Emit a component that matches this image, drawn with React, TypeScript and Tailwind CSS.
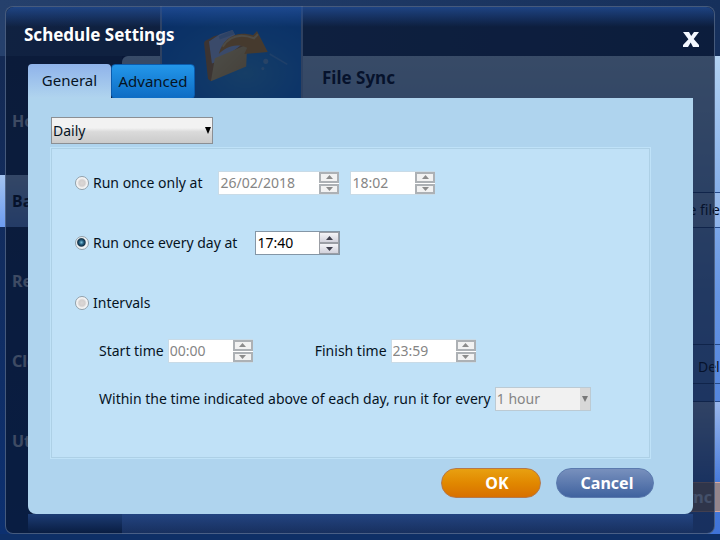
import { useState } from "react";
import type { ReactNode } from "react";

const navItems = ["Home", "Backup", "Restore", "Cloud", "Utilities"];

function FolderPicture() {
  return (
    <svg viewBox="0 0 142 92" preserveAspectRatio="none" className="block h-full w-full" aria-hidden="true">
      <defs>
        <radialGradient id="sky" cx="60%" cy="70%" r="80%">
          <stop offset="0" stopColor="#3aa4f0" />
          <stop offset="0.5" stopColor="#1c86f8" />
          <stop offset="1" stopColor="#0c70f0" />
        </radialGradient>
        <linearGradient id="folder" x1="0" y1="0" x2="1" y2="1">
          <stop offset="0" stopColor="#ffe089" />
          <stop offset="1" stopColor="#e0aa50" />
        </linearGradient>
      </defs>
      <rect width="142" height="92" fill="url(#sky)" />
      <path d="M110 46 L128 56" stroke="#a8d4ff" strokeWidth="1.5" opacity="0.4" />
      <path d="M43 36 Q43 33 47 32 L53 29 L57 28 L80 34 L85 38 L50 72 L47 70 Z" fill="#c08238" />
      <path d="M48 34 L59 27 L72 23 L76 30 L83 36 L60 52 L51 55 Z" fill="#b9d0ff" />
      <path d="M58 29 L72 23 L74 27 L59 32 Z" fill="#8fb6f0" />
      <path d="M50 72 L54 50 L87 37 L86 58 Z" fill="url(#folder)" />
      <path d="M58 46 C62 31 75 23 93 28 L97 24 L108 44 L84 46 L87 40 C74 35 65 40 58 46 Z" fill="#e6982a" />
      <path d="M62 39 C69 29 80 26 94 31 L98 27" fill="none" stroke="#ffd27a" strokeWidth="2" />
      <circle cx="106" cy="53" r="2.5" fill="#9cc8f0" opacity="0.7" />
      <circle cx="103" cy="60" r="1.5" fill="#9cc8f0" opacity="0.6" />
    </svg>
  );
}

function Background() {
  return (
    <div className="absolute inset-0 flex flex-col overflow-hidden bg-[#0a1b48]" aria-hidden="true">
      <div className="h-14 shrink-0 bg-linear-to-r from-[#25406c] to-[#16305c]" />
      <div className="flex min-h-0 flex-1">
        <div className="w-[122px] shrink-0 bg-linear-to-b from-[#142a54] to-[#0c3070] pt-[39px]">
          {navItems.map((name) => (
            <div
              key={name}
              className={
                name === "Backup"
                  ? "mb-7 flex h-[52px] items-center bg-linear-to-b from-[#a4c4f0] to-[#6d9cf0] pl-3 text-base font-bold text-[#00081c]"
                  : "mb-7 flex h-[52px] items-center pl-3 text-base font-bold text-[#c8d2e6]"
              }
            >
              {name}
            </div>
          ))}
        </div>
        <div className="flex flex-1 flex-col overflow-hidden rounded-tl-md bg-linear-to-b from-[#b2d2f2] via-[#6594e2] to-[#3f73d8] text-sm text-[#020a20]">
          <div className="flex h-[136px] pt-2.5 pl-[200px] text-[17px] font-bold">File Sync</div>
          <div className="flex h-9 items-center justify-end border-y border-[#244a8c] bg-white/15">the file</div>
          <div className="h-[116px]" />
          <div className="flex h-10 justify-end border-y border-[#244a8c] pt-3">
            <span className="w-[22px]">Delete</span>
          </div>
          <div className="h-[18px] border-b border-[#244a8c]" />
          <div className="h-[80px] bg-linear-to-b from-white/40 to-transparent" />
          <div className="flex h-[30px] justify-end">
            <span className="flex h-[30px] w-20 items-center justify-end border-y border-[#d8a8a0] bg-[#94858c] pr-2 text-base font-bold text-[#dde6ff]">
              Sync
            </span>
          </div>
        </div>
      </div>
      <div className="h-1.5 shrink-0 bg-[#0e2f66]" />
      <div className="absolute top-1.5 left-[160px] h-[96px] w-[143px] border-x-2 border-[#8fb0df]">
        <FolderPicture />
      </div>
    </div>
  );
}

function SpinField({
  id,
  label,
  initial,
  disabled = false,
  wide = false,
}: {
  id: string;
  label?: string;
  initial: string;
  disabled?: boolean;
  wide?: boolean;
}) {
  const [value, setValue] = useState(initial);
  const button = disabled
    ? "flex flex-1 items-center justify-center border-2 border-[#adb1b5] bg-[#f2f2f2] text-[#8c8c8c]"
    : "flex flex-1 items-center justify-center border border-[#9b9ea5] bg-linear-to-b from-[#f4f4f8] to-[#d2d2dc] text-[#41414f]";
  return (
    <span
      className={`flex h-6 border bg-white ${wide ? "w-[121px]" : "w-[85px]"} ${
        disabled ? "border-r-0 border-[#c9dbe7] text-[#858585]" : "border-[#8496a6] text-black"
      }`}
    >
      <input
        id={id}
        aria-label={label}
        type="text"
        value={value}
        disabled={disabled}
        onChange={(e) => setValue(e.target.value)}
        className="min-w-0 flex-1 bg-transparent pl-px outline-none"
      />
      <span className={disabled ? "flex w-5 flex-col gap-px" : "flex w-5 flex-col"}>
        <button type="button" aria-label="Increase" disabled={disabled} className={button}>
          <svg width="7" height="4" viewBox="0 0 7 4"><path d="M0 4 3.5 0 7 4Z" fill="currentColor" /></svg>
        </button>
        <button type="button" aria-label="Decrease" disabled={disabled} className={button}>
          <svg width="7" height="4" viewBox="0 0 7 4"><path d="M0 0 3.5 4 7 0Z" fill="currentColor" /></svg>
        </button>
      </span>
    </span>
  );
}

function RadioOption({
  id,
  checked,
  onSelect,
  children,
}: {
  id: string;
  checked: boolean;
  onSelect: () => void;
  children: ReactNode;
}) {
  return (
    <span className="flex items-center gap-1">
      <input
        id={id}
        type="radio"
        name="mode"
        checked={checked}
        onChange={onSelect}
        className="size-3.5 appearance-none rounded-full border border-[#93a0a9] bg-[radial-gradient(circle,#dcd7d5_0%,#d3cfce_35%,#f6f6f6_60%)] checked:bg-[radial-gradient(circle_at_45%_45%,#7fc5df_0%,#20597a_25%,#123147_40%,#eef2f4_52%)]"
      />
      <label htmlFor={id}>{children}</label>
    </span>
  );
}

export default function App() {
  const [mode, setMode] = useState("daily");
  return (
    <main className="relative flex min-h-screen px-[5px] py-1.5 font-['Noto_Sans','Open_Sans',sans-serif] text-sm text-[#06131f]">
      <Background />
      <section
        role="dialog"
        aria-labelledby="title"
        className="relative flex flex-1 flex-col rounded-lg border border-[#5f7597]/70 bg-[#081630]/72 pr-[21px] pl-[22px]"
      >
        <div className="absolute inset-x-0 top-0 h-5 rounded-t-lg bg-linear-to-b from-[#2553a0]/70 to-transparent" />
        <header className="relative flex h-[57px] items-start justify-between pt-4 text-white">
          <h1 id="title" className="-ml-1 text-[17px]/6 font-bold">Schedule Settings</h1>
          <button type="button" aria-label="Close" className="-mr-2.5 flex size-6 items-center justify-center pt-2">
            <svg width="16" height="15" viewBox="0 0 16 15">
              <path d="M0 0H6L8.2 4 11 0H16L10.7 7 16 13V15H10L7.7 10.6 5 15H0V13L5.4 7.3Z" fill="#f4f8ff" />
            </svg>
          </button>
        </header>
        <div role="tablist" className="relative flex h-[34px]">
          <button role="tab" aria-selected="true" className="w-[83px] rounded-t bg-linear-to-b from-[#8fb3ea] to-[#b0d4ee] text-[15px]">
            General
          </button>
          <button role="tab" aria-selected="false" className="h-[35px] w-[84px] rounded border border-[#0a5cae] bg-linear-to-b from-[#2397ea] to-[#0e6cc4] text-[15px]">
            Advanced
          </button>
        </div>
        <div className="relative flex flex-1 flex-col rounded-b-lg bg-[#afd4ee] pt-[19px] pr-[43px] pb-4 pl-[23px]">
          <div className="relative w-[162px]">
            <select
              aria-label="Schedule frequency"
              className="h-[27px] w-full appearance-none border border-[#8b8f94] bg-linear-to-b from-[#f2f2f2] from-40% via-[#dadada] via-55% to-[#cbcbcb] pl-px"
            >
              <option>Daily</option>
            </select>
            <svg width="6" height="7" viewBox="0 0 7 7" preserveAspectRatio="none" className="pointer-events-none absolute top-2.5 right-0.5">
              <path d="M0 0H7L3.5 7Z" fill="#000" />
            </svg>
          </div>
          <fieldset
            aria-label="Run schedule"
            className="mt-1 flex flex-1 flex-col border border-[#add0e6] bg-[#c0e1f7] px-[23px] pt-[22px] outline outline-[#bfe2f8]"
          >
            <div className="flex h-6 items-center gap-4">
              <RadioOption id="once" checked={mode === "once"} onSelect={() => setMode("once")}>
                Run once only at
              </RadioOption>
              <span className="flex gap-[11px]">
                <SpinField id="once-date" label="Run date" initial="26/02/2018" disabled wide />
                <SpinField id="once-time" label="Run time" initial="18:02" disabled />
              </span>
            </div>
            <div className="mt-9 flex h-6 items-center gap-[18px]">
              <RadioOption id="daily" checked={mode === "daily"} onSelect={() => setMode("daily")}>
                Run once every day at
              </RadioOption>
              <SpinField id="daily-time" label="Daily time" initial="17:40" />
            </div>
            <div className="mt-9 flex h-6 items-center">
              <RadioOption id="intervals" checked={mode === "intervals"} onSelect={() => setMode("intervals")}>
                Intervals
              </RadioOption>
            </div>
            <div className="mt-6 ml-6 flex h-6 items-center gap-[62px]">
              <span className="flex items-center gap-1">
                <label htmlFor="start">Start time</label>
                <SpinField id="start" initial="00:00" disabled />
              </span>
              <span className="flex items-center gap-1">
                <label htmlFor="finish">Finish time</label>
                <SpinField id="finish" initial="23:59" disabled />
              </span>
            </div>
            <div className="mt-6 ml-6 flex h-6 items-center gap-1">
              <label htmlFor="every">Within the time indicated above of each day, run it for every</label>
              <span className="relative w-24">
                <select
                  id="every"
                  disabled
                  className="h-6 w-full appearance-none border border-[#bccad3] bg-[#f1f1f1] pl-px text-[#858585] opacity-100"
                >
                  <option>1 hour</option>
                </select>
                <span className="pointer-events-none absolute inset-y-px right-px flex w-2.5 items-center justify-center bg-[#d8d8d8]">
                  <svg width="6" height="6" viewBox="0 0 6 6"><path d="M0 0H6L3 6Z" fill="#777" /></svg>
                </span>
              </span>
            </div>
          </fieldset>
          <footer className="mt-2.5 -mr-1 flex justify-end gap-[15px]">
            <button
              type="button"
              className="h-[30px] w-[100px] rounded-full border border-[#b5784a] bg-linear-to-b from-[#e8a010] via-[#e18800] to-[#d87000] pl-3 text-base font-bold text-white"
            >
              OK
            </button>
            <button
              type="button"
              className="h-[30px] w-[98px] rounded-full border border-[#5b7aae] bg-linear-to-b from-[#7890bd] to-[#40639f] pl-1 text-base font-bold text-white"
            >
              Cancel
            </button>
          </footer>
        </div>
        <div className="h-[19px] rounded-b bg-linear-to-b from-[#2a5196]/60 to-transparent" />
      </section>
    </main>
  );
}
